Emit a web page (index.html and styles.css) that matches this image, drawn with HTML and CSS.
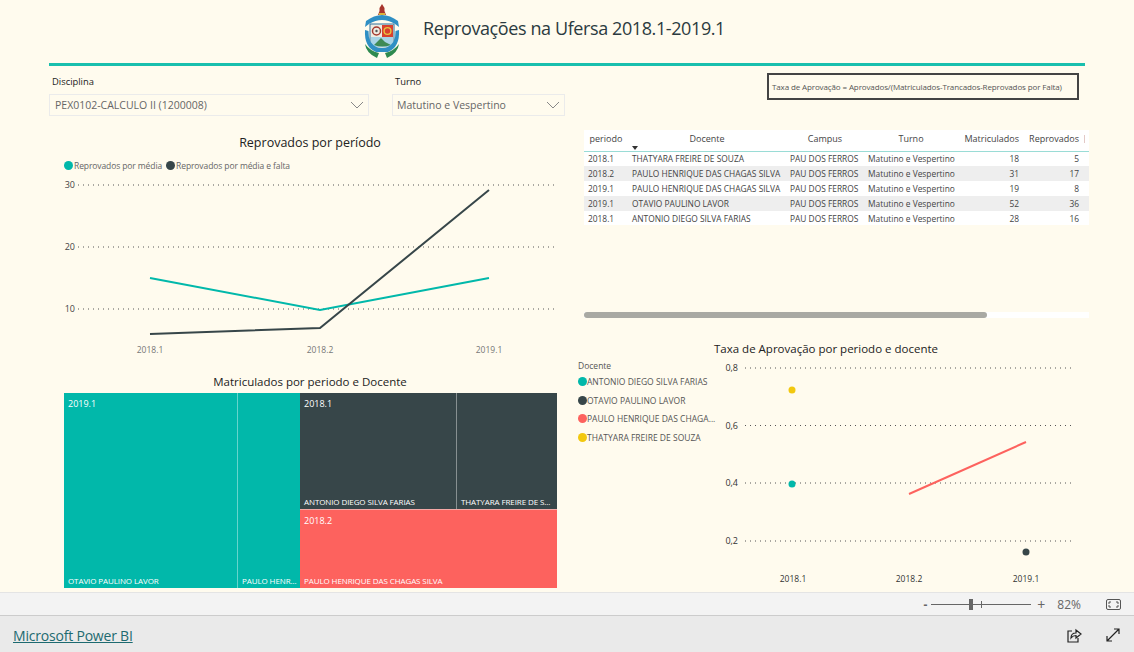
FILE: index.html
```html
<!DOCTYPE html>
<html lang="pt-BR">
<head>
    <meta charset="UTF-8">
    <title>Reprovações na Ufersa 2018.1-2019.1</title>
    <link rel="stylesheet" href="styles.css">
</head>
<body>
    <div class="canvas">
        <header class="title-row">
            <svg class="logo" width="36" height="54" viewBox="0 0 36 54">
                <path d="M15.500 7 L15.500 4 L18 0 L20.500 4 L20.500 7 L22 11 L14 11 Z" fill="#a8352c"/>
                <rect x="15" y="9" width="6" height="2" fill="#d9b23a"/>
                <path d="M2 17 Q18 5 34 17 L35 23 L31 20 Q18 12 5 20 L1 23 Z" fill="#2f8fc4"/>
                <path d="M6 20 L30 20 L30 42 Q18 47 6 42 Z" fill="#f4f1e4" stroke="#2c6f9c"/>
                <rect x="7" y="21" width="11" height="12" fill="#efece2"/>
                <circle cx="12.500" cy="27" r="4" fill="none" stroke="#a5392f" stroke-width="1.500"/>
                <circle cx="12.500" cy="27" r="1.200" fill="#555"/>
                <rect x="18" y="21" width="11" height="12" fill="#d8402e"/>
                <circle cx="23.500" cy="27" r="3.400" fill="none" stroke="#e9c440" stroke-width="1.400"/>
                <path d="M7 41 L7 33 L29 33 L29 41 Q18 46 7 41 Z" fill="#a8d3e6"/>
                <path d="M10 41 L17 34 L21 38 L27 41 Q18 44 10 41 Z" fill="#3f8a55"/>
                <path d="M1 26 Q0 43 12 48 L24 48 Q36 43 35 26 L31.500 27 Q32 40 22 44 L14 44 Q4 40 4.500 27 Z" fill="#2f8fc4"/>
                <path d="M1 40 Q2 49 13 54 L15 49 Q6 47 1 40 Z M35 40 Q34 49 23 54 L21 49 Q30 47 35 40 Z" fill="#2e8a4f"/>
            </svg>
            <h1>Reprovações na Ufersa 2018.1-2019.1</h1>
        </header>

        <main class="panels">
            <section class="left">
                <div class="filters">
                    <div class="filter filter-wide">
                        <label>Disciplina</label>
                        <div class="select">
                            <span>PEX0102-CALCULO II (1200008)</span>
                            <svg width="14" height="8" viewBox="0 0 14 8"><path d="M1 1 L7 7 L13 1" fill="none" stroke="#888"/></svg>
                        </div>
                    </div>
                    <div class="filter filter-narrow">
                        <label>Turno</label>
                        <div class="select">
                            <span>Matutino e Vespertino</span>
                            <svg width="14" height="8" viewBox="0 0 14 8"><path d="M1 1 L7 7 L13 1" fill="none" stroke="#888"/></svg>
                        </div>
                    </div>
                </div>

                <h2 class="chart-title line-title">Reprovados por período</h2>
                <div class="line-legend">
                    <span class="dot teal"></span><span class="legend-text">Reprovados por média</span>
                    <span class="dot dark"></span><span class="legend-text">Reprovados por média e falta</span>
                </div>
                <svg class="line-chart" width="520" height="184" viewBox="49 176 520 184">
                    <g class="grid">
                        <line x1="78" y1="184" x2="555" y2="184"/>
                        <line x1="78" y1="246" x2="555" y2="246"/>
                        <line x1="78" y1="308" x2="555" y2="308"/>
                    </g>
                    <g class="axis-y">
                        <text x="75" y="187">30</text>
                        <text x="75" y="249">20</text>
                        <text x="75" y="311">10</text>
                    </g>
                    <g class="axis-x">
                        <text x="150" y="352">2018.1</text>
                        <text x="320" y="352">2018.2</text>
                        <text x="489" y="352">2019.1</text>
                    </g>
                    <polyline points="150,277 320,309 489,277" fill="none" stroke="#01b8aa" stroke-width="2"/>
                    <polyline points="150,333 320,327 489,189" fill="none" stroke="#374649" stroke-width="2"/>
                </svg>

                <h2 class="chart-title tree-title">Matriculados por periodo e Docente</h2>
                <div class="treemap">
                    <div class="tree-group teal-bg">
                        <div class="tree-cell cell-otavio">
                            <span class="cell-head">2019.1</span>
                            <span class="cell-name">OTAVIO PAULINO LAVOR</span>
                        </div>
                        <div class="tree-cell cell-paulo">
                            <span class="cell-name">PAULO HENR...</span>
                        </div>
                    </div>
                    <div class="tree-side">
                        <div class="tree-group dark-bg">
                            <div class="tree-cell cell-antonio">
                                <span class="cell-head">2018.1</span>
                                <span class="cell-name">ANTONIO DIEGO SILVA FARIAS</span>
                            </div>
                            <div class="tree-cell cell-thatyara">
                                <span class="cell-name">THATYARA FREIRE DE S...</span>
                            </div>
                        </div>
                        <div class="tree-group red-bg">
                            <div class="tree-cell cell-full">
                                <span class="cell-head">2018.2</span>
                                <span class="cell-name">PAULO HENRIQUE DAS CHAGAS SILVA</span>
                            </div>
                        </div>
                    </div>
                </div>
            </section>

            <section class="right">
                <div class="formula">Taxa de Aprovação = Aprovados/(Matriculados-Trancados-Reprovados por Falta)</div>

                <div class="table-wrap">
                    <table class="grid-table">
                        <thead>
                            <tr>
                                <th class="c-per sorted">periodo</th>
                                <th class="c-doc">Docente</th>
                                <th class="c-cam">Campus</th>
                                <th class="c-tur">Turno</th>
                                <th class="c-mat">Matriculados</th>
                                <th class="c-rep">Reprovados</th>
                                <th class="c-cut"></th>
                            </tr>
                        </thead>
                        <tbody>
                            <tr><td>2018.1</td><td>THATYARA FREIRE DE SOUZA</td><td>PAU DOS FERROS</td><td>Matutino e Vespertino</td><td class="num">18</td><td class="num">5</td><td></td></tr>
                            <tr class="alt"><td>2018.2</td><td>PAULO HENRIQUE DAS CHAGAS SILVA</td><td>PAU DOS FERROS</td><td>Matutino e Vespertino</td><td class="num">31</td><td class="num">17</td><td></td></tr>
                            <tr><td>2019.1</td><td>PAULO HENRIQUE DAS CHAGAS SILVA</td><td>PAU DOS FERROS</td><td>Matutino e Vespertino</td><td class="num">19</td><td class="num">8</td><td></td></tr>
                            <tr class="alt"><td>2019.1</td><td>OTAVIO PAULINO LAVOR</td><td>PAU DOS FERROS</td><td>Matutino e Vespertino</td><td class="num">52</td><td class="num">36</td><td></td></tr>
                            <tr class="short"><td>2018.1</td><td>ANTONIO DIEGO SILVA FARIAS</td><td>PAU DOS FERROS</td><td>Matutino e Vespertino</td><td class="num">28</td><td class="num">16</td><td></td></tr>
                        </tbody>
                    </table>
                    <div class="scrollbar"><div class="thumb"></div></div>
                </div>

                <div class="rate">
                    <div class="rate-legend">
                        <div class="rate-legend-title">Docente</div>
                        <div class="rate-item"><span class="dot teal"></span>ANTONIO DIEGO SILVA FARIAS</div>
                        <div class="rate-item"><span class="dot dark"></span>OTAVIO PAULINO LAVOR</div>
                        <div class="rate-item"><span class="dot red"></span>PAULO HENRIQUE DAS CHAGA...</div>
                        <div class="rate-item"><span class="dot yellow"></span>THATYARA FREIRE DE SOUZA</div>
                    </div>
                    <div class="rate-chart">
                        <h2 class="chart-title rate-title">Taxa de Aprovação por periodo e docente</h2>
                        <svg width="370" height="236" viewBox="720 355 370 236">
                            <g class="grid">
                                <line x1="745" y1="367" x2="1072" y2="367"/>
                                <line x1="745" y1="424.5" x2="1072" y2="424.5"/>
                                <line x1="745" y1="482" x2="1072" y2="482"/>
                                <line x1="745" y1="540" x2="1072" y2="540"/>
                            </g>
                            <g class="axis-y dark-text">
                                <text x="738" y="370">0,8</text>
                                <text x="738" y="427.500">0,6</text>
                                <text x="738" y="485">0,4</text>
                                <text x="738" y="543">0,2</text>
                            </g>
                            <g class="axis-x dark-text">
                                <text x="793" y="581">2018.1</text>
                                <text x="909" y="581">2018.2</text>
                                <text x="1026" y="581">2019.1</text>
                            </g>
                            <circle cx="792" cy="389" r="3.500" fill="#f2c80f"/>
                            <circle cx="792" cy="483" r="3.500" fill="#01b8aa"/>
                            <circle cx="1026" cy="551" r="3.500" fill="#374649"/>
                            <line x1="909" y1="493" x2="1026" y2="441" stroke="#fd625e" stroke-width="2"/>
                        </svg>
                    </div>
                </div>
            </section>
        </main>
    </div>

    <div class="zoom-bar">
        <span class="zoom-minus">-</span>
        <div class="zoom-slider"><span class="zoom-tick"></span><span class="zoom-thumb"></span></div>
        <span class="zoom-plus">+</span>
        <span class="zoom-value">82%</span>
        <svg class="fit-icon" width="15" height="11" viewBox="0 0 15 11">
            <rect x="0.5" y="0.5" width="14" height="10" rx="1.500" fill="none" stroke="#555"/>
            <path d="M3 5 V3 H5 M10 3 H12 V5 M12 6 V8 H10 M5 8 H3 V6" fill="none" stroke="#555"/>
        </svg>
    </div>

    <footer class="footer">
        <a class="pbi-link" href="#">Microsoft Power BI</a>
        <div class="footer-icons">
            <svg width="15" height="15" viewBox="0 0 15 15">
                <path d="M5 3 H1 V14 H11 V10" fill="none" stroke="#222" stroke-width="1.200"/>
                <path d="M4 10 C4 6.500 6.500 5 9 5 V2 L14 6 L9 10 V7.500 C7 7.500 5.500 8 4 10 Z" fill="none" stroke="#222" stroke-width="1.200"/>
            </svg>
            <svg width="14" height="14" viewBox="0 0 14 14">
                <path d="M1 13 L13 1 M8 1 H13 V6 M1 8 V13 H6" fill="none" stroke="#222" stroke-width="1.200"/>
            </svg>
        </div>
    </footer>
</body>
</html>
```

FILE: styles.css
```css
* {
    margin: 0;
    padding: 0;
    box-sizing: border-box;
}

body {
    width: 1134px;
    height: 652px;
    overflow: hidden;
    font-family: "Open Sans", "Noto Sans", sans-serif;
    background: #fffbee;
    color: #333;
}

.canvas {
    height: 592px;
    overflow: hidden;
}

.title-row {
    height: 66px;
    margin: 0 49px;
    padding: 4px 0 0 315px;
    display: flex;
    gap: 23px;
    border-bottom: 3px solid #19bfae;
}

.logo {
    flex: none;
}

.title-row h1 {
    font-size: 18px;
    font-weight: 400;
    letter-spacing: -0.4px;
    line-height: 48px;
    color: #2b3a40;
}

.panels {
    display: grid;
    grid-template-columns: 529px 556px;
    padding-left: 49px;
}

/* left column */
.filters {
    display: flex;
    padding-top: 8px;
}

.filter label {
    display: block;
    height: 20px;
    padding-left: 3px;
    font-size: 9.400px;
    line-height: 15px;
    color: #222;
}

.filter-wide {
    width: 320px;
    margin-right: 23px;
}

.filter-narrow {
    width: 173px;
}

.select {
    height: 22px;
    padding: 0 4px 0 5px;
    display: flex;
    align-items: center;
    justify-content: space-between;
    border: 1px solid #ebebeb;
    font-size: 10.500px;
    color: #666;
}

.filter-narrow .select {
    padding-left: 4px;
}

.chart-title {
    font-weight: 400;
    text-align: center;
    color: #222;
}

.line-title {
    width: 522px;
    margin-top: 17px;
    font-size: 12.500px;
    line-height: 20px;
}

.line-legend {
    height: 16px;
    margin-top: 4px;
    padding-left: 15px;
    display: flex;
    align-items: center;
    font-size: 8.500px;
    color: #666;
}

.legend-text {
    margin: 0 4px 0 1px;
    letter-spacing: -0.1px;
}

.dot {
    display: inline-block;
    flex: none;
    width: 9px;
    height: 9px;
    border-radius: 50%;
}

.teal {
    background: #01b8aa;
}

.dark {
    background: #374649;
}

.red {
    background: #fd625e;
}

.yellow {
    background: #f2c80f;
}

.line-chart {
    display: block;
    margin-top: 4px;
}

.grid line {
    stroke: #555;
    stroke-width: 1;
    stroke-dasharray: 1 4;
}

.axis-y text {
    font-size: 9px;
    text-anchor: end;
    fill: #444;
}

.axis-x text {
    font-size: 8.500px;
    text-anchor: middle;
    fill: #777;
}

.axis-x.dark-text text,
.axis-y.dark-text text {
    fill: #333;
}

.tree-title {
    width: 522px;
    margin-top: 11px;
    margin-bottom: 1px;
    font-size: 11.500px;
    line-height: 20px;
}

/* treemap */
.treemap {
    width: 493px;
    height: 195px;
    margin: 0 0 0 15px;
    display: flex;
    color: #fff;
}

.tree-group {
    display: flex;
}

.teal-bg {
    width: 236px;
    background: #01b8aa;
}

.dark-bg {
    height: 116px;
    background: #374649;
}

.red-bg {
    flex: 1;
    background: #fd625e;
    border-top: 1px solid #f4a9a6;
}

.tree-side {
    flex: 1;
    display: flex;
    flex-direction: column;
}

.tree-cell {
    padding: 5px 4px 2px;
    display: flex;
    flex-direction: column;
    justify-content: space-between;
    white-space: nowrap;
    overflow: hidden;
}

.tree-cell + .tree-cell {
    border-left: 1px solid rgba(255, 255, 255, 0.4);
}

.cell-otavio {
    width: 173px;
}

.cell-paulo {
    flex: 1;
    justify-content: flex-end;
}

.cell-antonio {
    width: 156px;
}

.cell-thatyara {
    flex: 1;
    justify-content: flex-end;
}

.cell-full {
    flex: 1;
}

.cell-head {
    font-size: 9px;
    line-height: 12px;
}

.cell-name {
    font-size: 8px;
    line-height: 10px;
    letter-spacing: -0.1px;
}

/* right column */
.formula {
    width: 312px;
    height: 27px;
    margin: 7px 0 0 189px;
    padding-left: 3px;
    border: 2px solid #444;
    font-size: 8px;
    line-height: 23px;
    letter-spacing: -0.12px;
    color: #555;
    white-space: nowrap;
    overflow: hidden;
}

.table-wrap {
    width: 505px;
    margin: 30px 0 0 6px;
}

.grid-table {
    width: 505px;
    table-layout: fixed;
    border-collapse: collapse;
    background: #fff;
    font-size: 8.400px;
    color: #444;
}

.grid-table th {
    height: 21px;
    font-size: 9px;
    font-weight: 400;
    text-align: center;
    border-bottom: 1px solid #9adcd6;
    padding-bottom: 4px;
    position: relative;
    color: #444;
}

.grid-table td {
    height: 15px;
    padding-left: 4px;
    white-space: nowrap;
    overflow: hidden;
}

.short td {
    height: 14px;
}

.sorted::after {
    content: "";
    position: absolute;
    left: 48px;
    bottom: 1px;
    border: 3px solid transparent;
    border-top: 4px solid #333;
    border-bottom: 0;
}

.c-cut::before {
    content: "";
    position: absolute;
    left: 4px;
    top: 5px;
    width: 1px;
    height: 8px;
    background: #e3c9c6;
}

.grid-table td.num {
    text-align: right;
    padding-right: 1px;
}

.grid-table th.c-mat,
.grid-table th.c-rep {
    text-align: right;
    padding-right: 1px;
}

.alt td {
    background: #eeeeee;
}

.c-per {
    width: 44px;
}

.c-doc {
    width: 158px;
}

.c-cam {
    width: 78px;
}

.c-tur {
    width: 94px;
}

.c-mat {
    width: 62px;
}

.c-rep {
    width: 60px;
}

.scrollbar {
    height: 6px;
    margin-top: 87px;
    background: #fff;
}

.thumb {
    width: 403px;
    height: 6px;
    border-radius: 3px;
    background: #a9a9a3;
}

/* scatter */
.rate {
    display: flex;
    margin-top: 21px;
}

.rate-legend {
    width: 142px;
    padding-top: 20px;
    font-size: 8.500px;
    color: #555;
}

.rate-legend-title {
    height: 13px;
    line-height: 13px;
}

.rate-item {
    height: 18.700px;
    display: flex;
    align-items: center;
    white-space: nowrap;
}

.rate-chart svg {
    display: block;
}

.rate-title {
    width: 210px;
    margin-left: -6px;
    margin-bottom: -3px;
    font-size: 11.500px;
    line-height: 20px;
    white-space: nowrap;
}

/* bottom bars */
.zoom-bar {
    height: 23px;
    padding-right: 13px;
    display: flex;
    align-items: center;
    justify-content: flex-end;
    background: #f3f3f3;
    border-top: 1px solid #e4e4e4;
    font-size: 12px;
    color: #666;
}

.zoom-minus {
    font-weight: 700;
    margin-right: 4px;
}

.zoom-slider {
    width: 100px;
    height: 1px;
    background: #666;
    position: relative;
}

.zoom-thumb {
    position: absolute;
    left: 38px;
    top: -5px;
    width: 4px;
    height: 11px;
    background: #666;
}

.zoom-tick {
    position: absolute;
    left: 50px;
    top: -3px;
    width: 1px;
    height: 7px;
    background: #666;
}

.zoom-plus {
    margin: 0 0 0 6px;
    font-size: 14px;
}

.zoom-value {
    margin: 0 25px 0 12px;
}

.footer {
    height: 37px;
    padding: 2px 14px 0 13px;
    display: flex;
    align-items: center;
    justify-content: space-between;
    background: #eaeaea;
    border-top: 1px solid #cccccc;
}

.pbi-link {
    font-size: 14px;
    letter-spacing: -0.2px;
    color: #1d6a70;
}

.footer-icons {
    display: flex;
    align-items: center;
    gap: 24px;
}
```
